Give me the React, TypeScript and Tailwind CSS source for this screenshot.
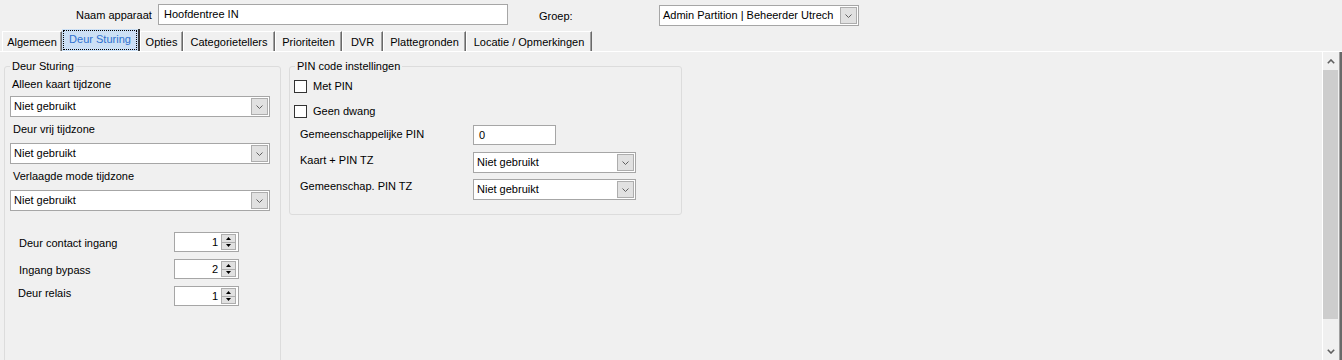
import React from 'react'

const font = "font-['Liberation_Sans',Arial,sans-serif]"

const tabs = [
  { label: 'Algemeen', w: 'w-[60px]' },
  { label: 'Deur Sturing', w: 'w-[78px]', active: true },
  { label: 'Opties', w: 'w-[43px]' },
  { label: 'Categorietellers', w: 'w-[92px]' },
  { label: 'Prioriteiten', w: 'w-[67px]' },
  { label: 'DVR', w: 'w-[41px]' },
  { label: 'Plattegronden', w: 'w-[83px]' },
  { label: 'Locatie / Opmerkingen', w: 'w-[126px]' },
]

const Chevron = () => (
  <svg width="7" height="4" viewBox="0 0 7 4" className="block">
    <polyline points="0.5,0.5 3.5,3.5 6.5,0.5" fill="none" stroke="#5f5f5f" strokeWidth="1" />
  </svg>
)

const ScrollArrow = ({ up }: { up?: boolean }) => (
  <svg width="8" height="5" viewBox="0 0 8 5" className="block">
    <polyline
      points={up ? '0.8,4.2 4,1 7.2,4.2' : '0.8,0.8 4,4 7.2,0.8'}
      fill="none"
      stroke="#606060"
      strokeWidth="1.6"
    />
  </svg>
)

const Triangle = ({ up }: { up?: boolean }) => (
  <svg width="5" height="3" viewBox="0 0 5 3" className="block">
    <polygon points={up ? '0,3 2.5,0 5,3' : '0,0 2.5,3 5,0'} fill="#000" />
  </svg>
)

type ComboProps = { text: string; className?: string }

const ComboBox = ({ text, className = '' }: ComboProps) => (
  <div className={`flex h-[21px] shrink-0 border border-[#a6a6a6] bg-white ${className}`}>
    <span className="flex-1 self-center overflow-hidden whitespace-nowrap pl-[3px]">{text}</span>
    <div className="m-[1px] flex w-[17px] shrink-0 items-center justify-center border border-[#adadad] bg-[#e1e1e1]">
      <Chevron />
    </div>
  </div>
)

const UpDown = ({ value }: { value: number }) => (
  <div className="flex h-[20px] w-[65px] shrink-0 border border-[#a6a6a6] bg-white">
    <span className="flex-1 self-center pr-[3px] text-right">{value}</span>
    <div className="my-[1px] mr-[2px] flex w-[15px] flex-col border border-[#adadad] bg-[#e1e1e1]">
      <div className="flex flex-1 items-center justify-center border-b border-[#adadad]">
        <Triangle up />
      </div>
      <div className="flex flex-1 items-center justify-center">
        <Triangle />
      </div>
    </div>
  </div>
)

const CheckRow = ({ label, className = '' }: { label: string; className?: string }) => (
  <label className={`flex h-[13px] items-center gap-[6px] ${className}`}>
    <span className="h-[13px] w-[13px] shrink-0 border border-[#333] bg-white" />
    <span>{label}</span>
  </label>
)

export default function App() {
  return (
    <div className={`h-[360px] w-[1342px] overflow-hidden bg-[#f0f0f0] text-[11px] leading-[13px] text-black ${font}`}>
      {/* kop: naam + groep */}
      <div className="flex h-[29px] items-start">
        <span className="ml-[76px] mt-[9px] w-[82px] whitespace-nowrap">Naam apparaat</span>
        <div className="mt-[4px] flex h-[21px] w-[350px] items-center border border-[#a6a6a6] bg-white pl-[5px]">
          Hoofdentree IN
        </div>
        <span className="ml-[31px] mt-[10px] w-[120px]">Groep:</span>
        <ComboBox className="mt-[5px] w-[200px]" text="Admin Partition | Beheerder Utrech" />
      </div>

      {/* tabbladen */}
      <div className="flex h-[22px] items-end pl-[2px]">
        {tabs.map((t) =>
          t.active ? (
            <div
              key={t.label}
              className={`flex h-[22px] ${t.w} shrink-0 border-r-2 border-r-[#3a3a3a] bg-[#cce0f5] p-[1px]`}
            >
              <div className="flex flex-1 justify-center border border-dotted border-black pt-[2px] text-[#2f72cf]">
                {t.label}
              </div>
            </div>
          ) : (
            <div
              key={t.label}
              className={`flex h-[20px] ${t.w} shrink-0 items-center justify-center whitespace-nowrap border-l border-t border-l-white border-t-white border-r border-r-[#696969] pt-[2px] shadow-[inset_-1px_0_0_#a0a0a0]`}
            >
              {t.label}
            </div>
          )
        )}
      </div>
      <div className="h-px bg-white" />

      {/* inhoud */}
      <div className="flex h-[308px]">
        <div className="flex flex-1 items-start gap-[8px] pl-[4px]">
          <fieldset className="mt-[8px] h-[320px] w-[277px] shrink-0 rounded-[3px] border border-[#dcdcdc]">
            <legend className="ml-[5px] px-[2px]">Deur Sturing</legend>
            <div className="flex flex-col pl-[5px]">
              <span className="ml-[2px] mt-[5px]">Alleen kaart tijdzone</span>
              <ComboBox className="mt-[5px] w-[260px]" text="Niet gebruikt" />
              <span className="ml-[3px] mt-[6px]">Deur vrij tijdzone</span>
              <ComboBox className="mt-[7px] w-[260px]" text="Niet gebruikt" />
              <span className="ml-[3px] mt-[6px]">Verlaagde mode tijdzone</span>
              <ComboBox className="mt-[7px] w-[260px]" text="Niet gebruikt" />

              <div className="mt-[21px] flex flex-col gap-[7px] pl-[9px]">
                <div className="flex items-center">
                  <span className="mt-[2px] w-[155px]">Deur contact ingang</span>
                  <UpDown value={1} />
                </div>
                <div className="flex items-center">
                  <span className="mt-[2px] w-[155px]">Ingang bypass</span>
                  <UpDown value={2} />
                </div>
                <div className="flex items-center">
                  <span className="-ml-px mb-[6px] w-[156px]">Deur relais</span>
                  <UpDown value={1} />
                </div>
              </div>
            </div>
          </fieldset>

          <fieldset className="mt-[8px] w-[393px] shrink-0 rounded-[3px] border border-[#dcdcdc] pb-[14px]">
            <legend className="ml-[5px] px-[2px]">PIN code instellingen</legend>
            <div className="flex flex-col pl-[4px]">
              <CheckRow className="mt-[7px]" label="Met PIN" />
              <CheckRow className="mt-[12px]" label="Geen dwang" />

              <div className="mt-[7px] flex items-start pl-[6px]">
                <span className="mt-[3px] w-[173px]">Gemeenschappelijke PIN</span>
                <div className="flex h-[20px] w-[83px] items-center border border-[#a6a6a6] bg-white pl-[5px]">0</div>
              </div>
              <div className="mt-[7px] flex items-start pl-[6px]">
                <span className="mt-[2px] w-[173px]">Kaart + PIN TZ</span>
                <ComboBox className="w-[163px]" text="Niet gebruikt" />
              </div>
              <div className="mt-[6px] flex items-start pl-[6px]">
                <span className="mt-[1px] w-[173px]">Gemeenschap. PIN TZ</span>
                <ComboBox className="w-[163px]" text="Niet gebruikt" />
              </div>
            </div>
          </fieldset>
        </div>

        {/* schuifbalk */}
        <div className="w-px bg-white" />
        <div className="flex w-[16px] flex-col">
          <div className="flex h-[18px] items-center justify-center">
            <ScrollArrow up />
          </div>
          <div className="h-[249px] w-[15px] bg-[#cdcdcd]" />
          <div className="flex-1" />
          <div className="flex h-[17px] items-center justify-center">
            <ScrollArrow />
          </div>
        </div>
        <div className="w-px bg-[#a0a0a0]" />
        <div className="w-[2px] bg-[#696969]" />
      </div>
    </div>
  )
}
